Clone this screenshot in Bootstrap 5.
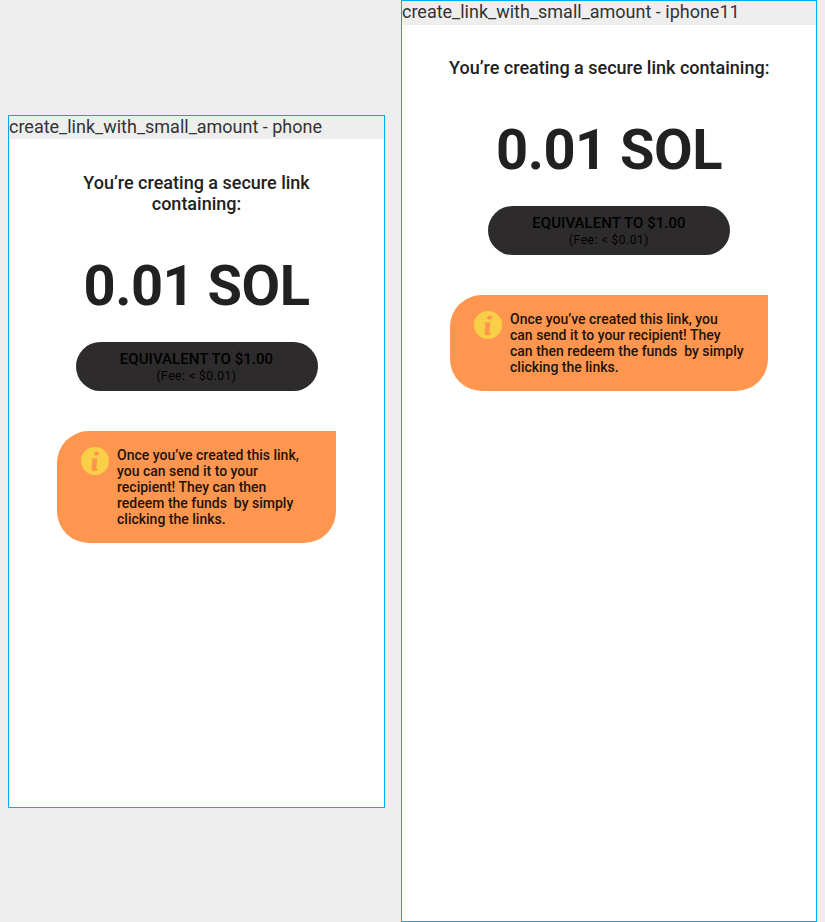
<!DOCTYPE html>
<html lang="en">
<head>
<meta charset="utf-8">
<title>create_link_with_small_amount</title>
<link href="https://cdn.jsdelivr.net/npm/bootstrap@5.3.0/dist/css/bootstrap.min.css" rel="stylesheet">
<style>
body{background:#eee;font-family:Roboto,sans-serif;color:#212121;width:825px;height:922px;overflow:hidden}
.board{padding-left:8px;gap:16px}
.device{border:1px solid #03a9f4;background:#fff}
.device-phone{width:377px;height:693px}
.device-iphone{width:416px;height:922px}
.device-name{background:#eee;color:#333;height:24px;font-size:18px;line-height:21px;font-weight:400}
.device-phone .device-name{height:23.5px}
.intro{font-size:18px;line-height:21px;font-weight:500;margin-top:32px;width:320px}
.device-phone .intro{width:280px;margin-top:33px}
.amount{font-size:56px;line-height:66px;font-weight:700;letter-spacing:-.5px;margin-top:39px}
.equiv{width:242px;height:49px;background:#2d2b2c;color:#000;margin-top:23px;padding-top:8px}
.equiv-main{font-size:15px;line-height:18px;font-weight:500;letter-spacing:.05px}
.equiv-fee{font-size:12px;line-height:16px;letter-spacing:.53px}
.tip{width:318px;background:#ff9650;color:#1e1309;border-radius:32px 0 32px 32px;margin-top:40px;padding:16px 24px;font-size:14px;line-height:16px;font-weight:500;gap:8px}
.device-iphone .tip{padding-right:24.3px}
.device-phone .tip{width:279px}
.tip p{white-space:pre-wrap}
</style>
<script src="https://cdn.jsdelivr.net/npm/bootstrap@5.3.0/dist/js/bootstrap.bundle.min.js"></script>
</head>
<body>
<main class="board d-flex align-items-center">
<section class="device device-phone d-flex flex-column align-items-center">
<div class="device-name w-100">create_link_with_small_amount - phone</div>
<div class="intro text-center">You’re creating a secure link containing:</div>
<div class="amount">0.01 SOL</div>
<div class="equiv rounded-pill text-center"><div class="equiv-main">EQUIVALENT TO $1.00</div><div class="equiv-fee">(Fee: &lt; $0.01)</div></div>
<div class="tip d-flex"><svg class="flex-shrink-0" width="28" height="28" viewBox="0 0 28 28"><circle cx="14" cy="14" r="14" fill="#f9cf48"/><path d="M10.300 11.400q3 .1 6-.5l-.9 9.300q-.1 2.200 1.700 1.900v1q-1.700 1.200-4 1.200-2.800-.2-2.500-2.900l.8-7.200q.2-2-1.100-2.200z" fill="#ff9650"/><ellipse cx="15.600" cy="6.600" rx="2.500" ry="2.200" fill="#ff9650"/></svg><p class="m-0">Once you’ve created this link, you can send it to your recipient! They can then redeem the funds  by simply clicking the links.</p></div>
</section>
<section class="device device-iphone d-flex flex-column align-items-center">
<div class="device-name w-100">create_link_with_small_amount - iphone11</div>
<div class="intro text-center text-nowrap">You’re creating a secure link containing:</div>
<div class="amount">0.01 SOL</div>
<div class="equiv rounded-pill text-center"><div class="equiv-main">EQUIVALENT TO $1.00</div><div class="equiv-fee">(Fee: &lt; $0.01)</div></div>
<div class="tip d-flex"><svg class="flex-shrink-0" width="28" height="28" viewBox="0 0 28 28"><circle cx="14" cy="14" r="14" fill="#f9cf48"/><path d="M10.300 11.400q3 .1 6-.5l-.9 9.300q-.1 2.200 1.700 1.900v1q-1.700 1.200-4 1.200-2.800-.2-2.500-2.900l.8-7.200q.2-2-1.100-2.200z" fill="#ff9650"/><ellipse cx="15.600" cy="6.600" rx="2.500" ry="2.200" fill="#ff9650"/></svg><p class="m-0">Once you’ve created this link, you can send it to your recipient! They can then redeem the funds  by simply clicking the links.</p></div>
</section>
</main>
</body>
</html>
